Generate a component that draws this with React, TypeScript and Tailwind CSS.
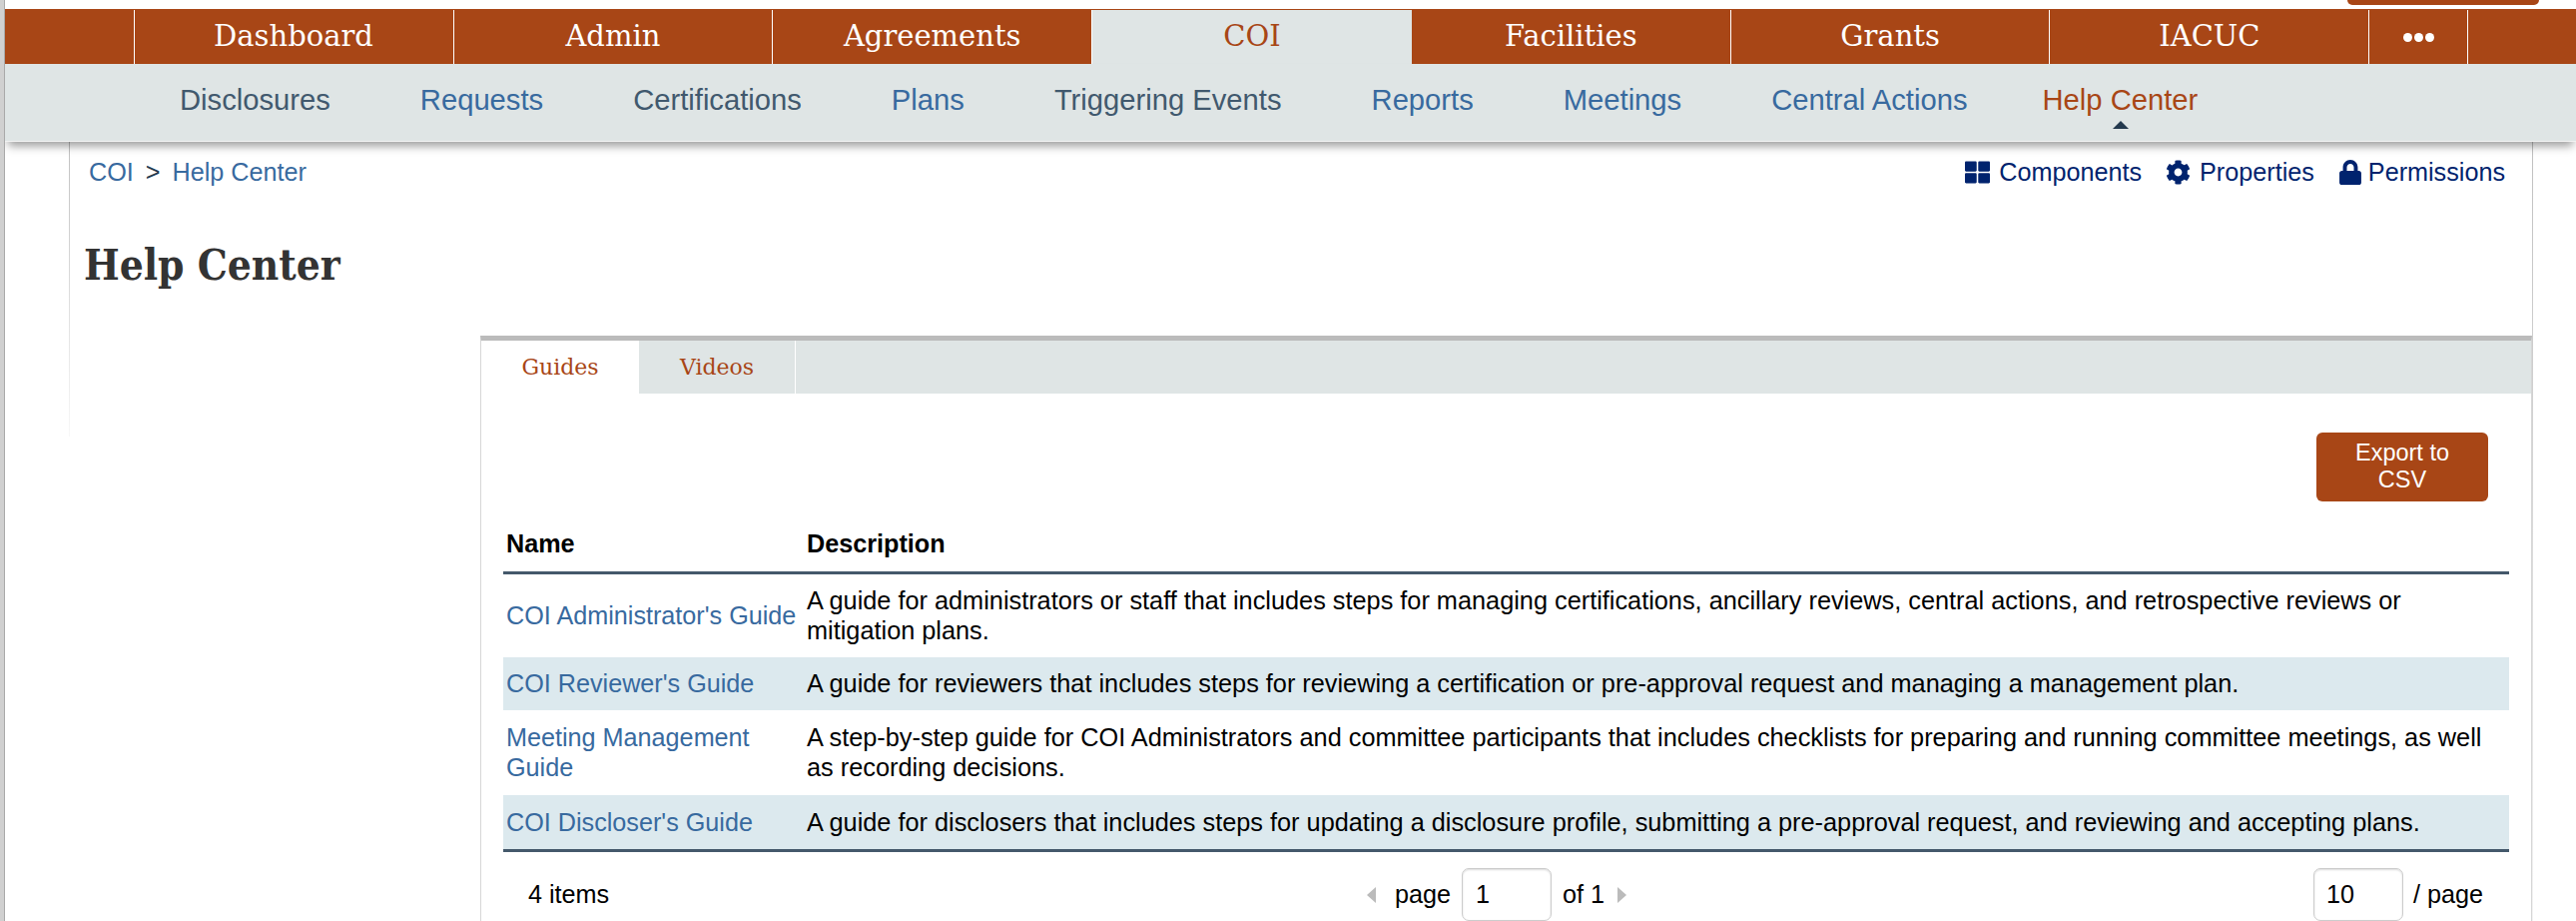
import React from "react";
import { FaThLarge, FaCog, FaLock } from "react-icons/fa";

const slab = "font-['DejaVu_Serif',serif]";
const top = ["Admin", "Agreements", "COI", "Facilities", "Grants", "IACUC"];
const sub: [string, boolean][] = [["Disclosures", true], ["Requests", false], ["Certifications", true], ["Plans", false], ["Triggering Events", true], ["Reports", false], ["Meetings", false], ["Central Actions", false]];
const rows: [string, string, boolean, string][] = [
  ["COI Administrator's Guide", "A guide for administrators or staff that includes steps for managing certifications, ancillary reviews, central actions, and retrospective reviews or mitigation plans.", false, "h-[83px]"],
  ["COI Reviewer's Guide", "A guide for reviewers that includes steps for reviewing a certification or pre-approval request and managing a management plan.", true, "h-[53px]"],
  ["Meeting Management Guide", "A step-by-step guide for COI Administrators and committee participants that includes checklists for preparing and running committee meetings, as well as recording decisions.", false, "h-[85px]"],
  ["COI Discloser's Guide", "A guide for disclosers that includes steps for updating a disclosure profile, submitting a pre-approval request, and reviewing and accepting plans.", true, "h-[54px]"],
];

export default function App() {
  return (
    <div className="relative h-[922px] w-full overflow-hidden bg-white pt-[9px] pl-[5px] font-['Liberation_Sans',Arial,sans-serif] text-black">
      <div className="absolute left-0 top-0 bottom-0 z-20 w-[5px] border-r border-[#a9a9a9] bg-[#d0d0d0]" />
      <div className="absolute right-[37px] top-0 h-[5px] w-[192px] rounded-b-[6px] bg-[#a84616]" />
      <nav className={`flex h-[55px] bg-[#a84616] pt-[1px] text-[29px] text-white ${slab}`}>
        <div className="w-[129.5px] border-r border-white" />
        <div className="flex w-[320px] items-center justify-center border-r border-white">Dashboard</div>
        {top.map((t) => (
          <div key={t} className={t === "COI" ? "flex w-[319.8px] items-center justify-center bg-[#dfe5e5] text-[#a84616]" : "flex w-[319.8px] items-center justify-center border-r border-white"}>{t}</div>
        ))}
        <div className="flex w-[98.5px] items-center justify-center gap-[2px] border-r border-white">
          <span className="h-[9px] w-[9px] rounded-full bg-white" />
          <span className="h-[9px] w-[9px] rounded-full bg-white" />
          <span className="h-[9px] w-[9px] rounded-full bg-white" />
        </div>
      </nav>
      <div className="relative z-10 flex h-[78px] items-start border-b border-[#f2f2f2] bg-[#dfe5e5] pl-[175px] pt-[18px] text-[29.2px] shadow-[0_7px_9px_-3px_rgba(0,0,0,0.4)]">
        {sub.map(([s, dark]) => (
          <span key={s} className={dark ? "mr-[90px] leading-[36px] text-[#41596e]" : "mr-[90px] leading-[36px] text-[#386a9f]"}>{s}</span>
        ))}
        <span className="relative -ml-[15px] leading-[36px] text-[#a84616]">
          Help Center
          <span className="absolute left-[70px] top-[39px] h-0 w-0 border-x-[8px] border-b-[8px] border-x-transparent border-b-[#24394e]" />
        </span>
      </div>
      <main className="relative">
        <div className="absolute left-[64px] top-0 h-[295px] w-px bg-gradient-to-b from-[#c0c0c0] to-[#f8f8f8]" />
        <div className="absolute left-[2531px] top-0 h-[780px] w-px bg-gradient-to-b from-[#c0c0c0] to-[#f4f4f4]" />
        <div className="flex h-[62px] items-center justify-between pl-[84px] pr-[71px] text-[25.2px]">
          <div className="flex items-center text-[#386a9f]">
            <span>COI</span>
            <span className="mx-[12px] text-[#24394e]">&gt;</span>
            <span>Help Center</span>
          </div>
          <div className="flex items-center text-[#00236e]">
            <FaThLarge className="mr-[9px] h-[25px] w-[25px]" />
            <span>Components</span>
            <FaCog className="ml-[24px] mr-[9px] h-[25px] w-[25px]" />
            <span>Properties</span>
            <FaLock className="ml-[25px] mr-[7px] h-[25px] w-[22px]" />
            <span>Permissions</span>
          </div>
        </div>
        <h1 className="ml-[79px] mt-[37px] h-[50px] font-['DejaVu_Serif_Condensed','DejaVu_Serif',serif] text-[42px] font-bold leading-[50px] text-[#333]">Help Center</h1>
        <section className="absolute left-[476px] top-[194px] h-[780px] w-[2055px] border-x border-[#d6d6d6] border-t-[5px] border-t-[#bbbbbb] bg-white">
          <div className={`flex h-[53px] bg-[#dfe5e5] text-[22px] text-[#a84616] ${slab}`}>
            <div className="flex w-[158px] items-center justify-center bg-white">Guides</div>
            <div className="flex w-[157px] items-center justify-center border-r border-white">Videos</div>
          </div>
          <div className="flex justify-end pr-[43px] pt-[39px]">
            <button className="h-[69px] w-[172px] rounded-[6px] bg-[#a84616] pb-[2px] text-center text-[23.5px] leading-[27px] text-white">Export to<br />CSV</button>
          </div>
          <div className="ml-[22px] mr-[22px] mt-[16px] text-[25.2px]">
            <div className="flex h-[57px] items-center border-b-[3px] border-[#44586b] font-bold">
              <div className="w-[304px] pl-[3px]">Name</div>
              <div>Description</div>
            </div>
            {rows.map(([n, d, striped, h]) => (
              <div key={n} className={`flex items-center pb-[1px] ${h} ${striped ? "bg-[#dce9ee]" : ""}`}>
                <div className="w-[304px] shrink-0 pl-[3px] pr-[4px] leading-[30px] text-[#386a9f]">{n}</div>
                <div className="pr-[20px] text-[25.3px] leading-[30px]">{d}</div>
              </div>
            ))}
            <div className="flex h-[3px] bg-[#44586b]" />
            <div className="relative flex h-[90px] items-start pt-[16px]">
              <span className="ml-[25px] mt-[12px] leading-[29px]">4 items</span>
              <div className="absolute left-[865px] top-[16px] flex items-center">
                <span className="h-0 w-0 border-y-[8px] border-r-[9px] border-y-transparent border-r-[#bbbbbb]" />
                <span className="ml-[19px]">page</span>
                <span className="ml-[11px] h-[53px] w-[90px] rounded-[7px] border border-[#cccccc] pl-[13px] leading-[51px] shadow-[inset_0_1px_2px_rgba(0,0,0,0.15)]">1</span>
                <span className="ml-[11px]">of 1</span>
                <span className="ml-[13px] h-0 w-0 border-y-[8px] border-l-[9px] border-y-transparent border-l-[#bbbbbb]" />
              </div>
              <div className="absolute left-[1813px] top-[16px] flex items-center">
                <span className="h-[53px] w-[90px] rounded-[7px] border border-[#cccccc] pl-[12px] leading-[51px] shadow-[inset_0_1px_2px_rgba(0,0,0,0.15)]">10</span>
                <span className="ml-[10px]">/ page</span>
              </div>
            </div>
          </div>
        </section>
      </main>
    </div>
  );
}
